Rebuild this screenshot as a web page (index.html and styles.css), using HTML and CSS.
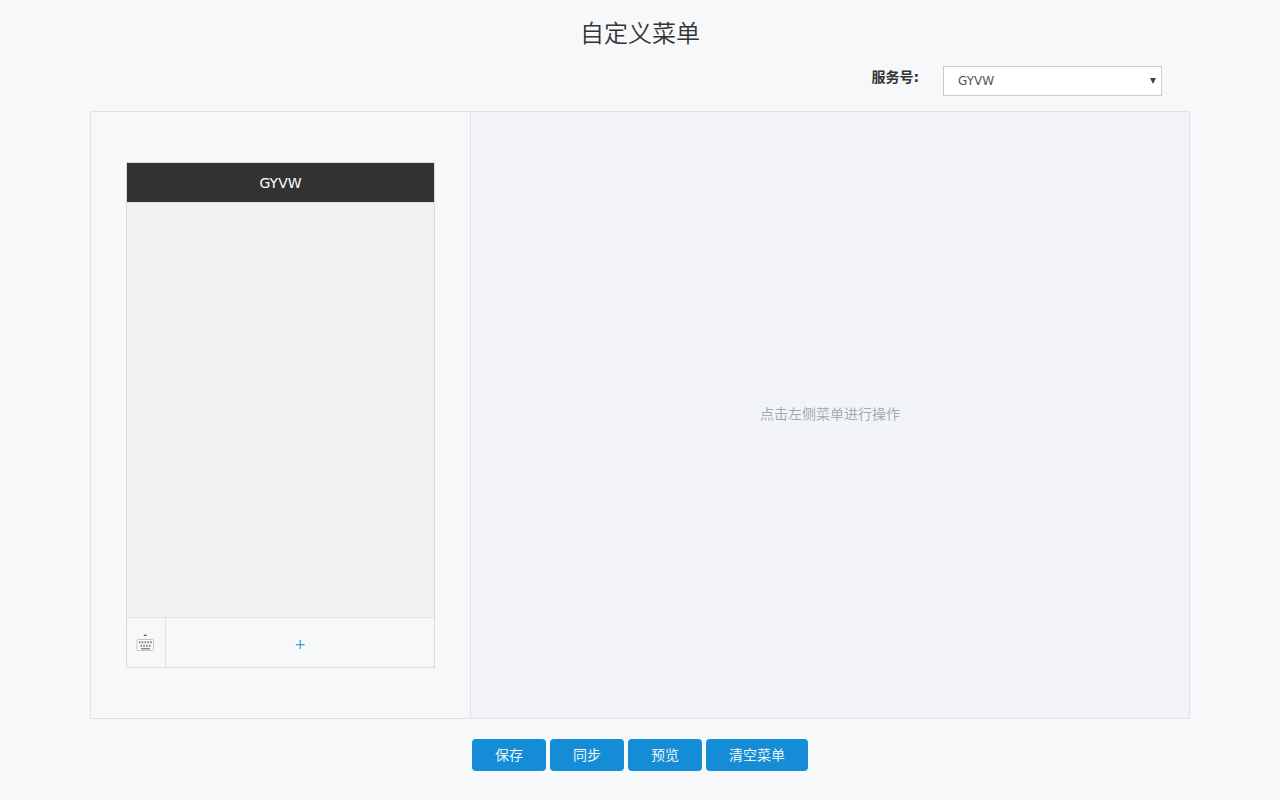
FILE: index.html
```html
<!DOCTYPE html>
<html lang="zh-CN">
<head>
  <meta charset="utf-8">
  <meta name="viewport" content="width=device-width, initial-scale=1">
  <title>自定义菜单</title>
  <link rel="stylesheet" href="styles.css">
</head>
<body>
  <main class="page">
    <h1 class="title">自定义菜单</h1>
    <div class="account">
      <label class="account-label" for="account">服务号:</label>
      <div class="select-wrap">
        <select class="account-select" id="account">
          <option>GYVW</option>
        </select>
        <svg class="select-arrow" viewBox="0 0 6 6" aria-hidden="true"><path d="M0 0h6L3 6z" fill="#444"/></svg>
      </div>
    </div>
    <div class="editor">
      <section class="preview">
        <div class="phone">
          <div class="phone-head">GYVW</div>
          <div class="phone-body"></div>
          <div class="phone-foot">
            <button class="keyboard" type="button" aria-label="键盘">
              <svg class="keyboard-icon" viewBox="0 0 18 18" aria-hidden="true">
                <path d="M7.500 2 8.500 .6h1.600l1 1.400z" fill="#666"/>
                <rect x="1" y="5.500" width="16.500" height="11" rx="1" fill="#fbfbfb" stroke="#c4c4c4"/>
                <path d="M3 8.200h13.500" stroke="#777" stroke-width="2" stroke-dasharray="1.500 1.300"/>
                <path d="M4.500 11.700h10.500" stroke="#777" stroke-width="2" stroke-dasharray="1.500 1.300"/>
                <path d="M5 14.700h9" stroke="#888" stroke-width="1.500"/>
              </svg>
            </button>
            <button class="add" type="button" aria-label="添加菜单">+</button>
          </div>
        </div>
      </section>
      <section class="detail">
        <p class="hint">点击左侧菜单进行操作</p>
      </section>
    </div>
    <div class="actions">
      <button class="btn" type="button">保存</button>
      <button class="btn" type="button">同步</button>
      <button class="btn" type="button">预览</button>
      <button class="btn" type="button">清空菜单</button>
    </div>
  </main>
</body>
</html>
```
FILE: styles.css
```css
* {
  box-sizing: border-box;
}

body {
  margin: 0;
  background: #f7f8fa;
  color: #333;
  font: 14px/20px "DejaVu Sans", "Noto Sans CJK SC", sans-serif;
}

button,
select {
  font-family: inherit;
}

.page {
  max-width: 1100px;
  margin: 0 auto;
  padding: 16px 0 28px;
}

.title {
  margin: 0 0 14px;
  font-size: 24px;
  font-weight: 350;
  line-height: 36px;
  text-align: center;
}

.account {
  display: flex;
  justify-content: flex-end;
  gap: 24px;
  margin: 0 28px 15px 0;
}

.account-label {
  font-weight: 700;
  line-height: 22px;
}

.select-wrap {
  position: relative;
  width: 219px;
}

.account-select {
  appearance: none;
  display: block;
  width: 100%;
  height: 30px;
  padding: 0 24px 0 14px;
  border: 1px solid #ccc;
  border-radius: 0;
  background: #fff;
  color: #555;
  font-size: 12px;
}

.select-arrow {
  position: absolute;
  top: 12px;
  right: 6px;
  width: 6px;
  height: 6px;
  pointer-events: none;
}

.editor {
  display: flex;
  border: 1px solid #dfe3e7;
}

.preview {
  flex: 0 0 380px;
  padding: 50px 35px;
  border-right: 1px solid #dfe3e7;
}

.phone {
  border: 1px solid #d9dcdf;
}

.phone-head {
  height: 40px;
  border-bottom: 1px solid #e2e2e2;
  background: #323232;
  color: #fff;
  line-height: 40px;
  text-align: center;
}

.phone-body {
  height: 414px;
  background: #f2f2f2;
}

.phone-foot {
  display: flex;
  height: 50px;
  border-top: 1px solid #dfe3e7;
}

.keyboard {
  display: flex;
  flex: 0 0 39px;
  align-items: center;
  justify-content: center;
  padding: 0 2px 0 0;
  border: 0;
  border-right: 1px solid #dfe3e7;
  background: none;
}

.keyboard-icon {
  width: 18px;
  height: 18px;
}

.add {
  flex: 1;
  padding: 2px 0 0;
  border: 0;
  background: none;
  color: #2ba5cc;
  font-size: 14px;
}

.detail {
  display: flex;
  flex: 1;
  align-items: center;
  justify-content: center;
  background: #f2f4f8;
}

.hint {
  margin: 0;
  padding-bottom: 2px;
  color: #9aa8b1;
  font-weight: 350;
}

.actions {
  display: flex;
  justify-content: center;
  gap: 4px;
  margin-top: 20px;
}

.btn {
  height: 32px;
  padding: 0 23px 2px;
  border: 0;
  border-radius: 4px;
  background: #148dd6;
  color: #fff;
  font-size: 14px;
  font-weight: 350;
}
```
